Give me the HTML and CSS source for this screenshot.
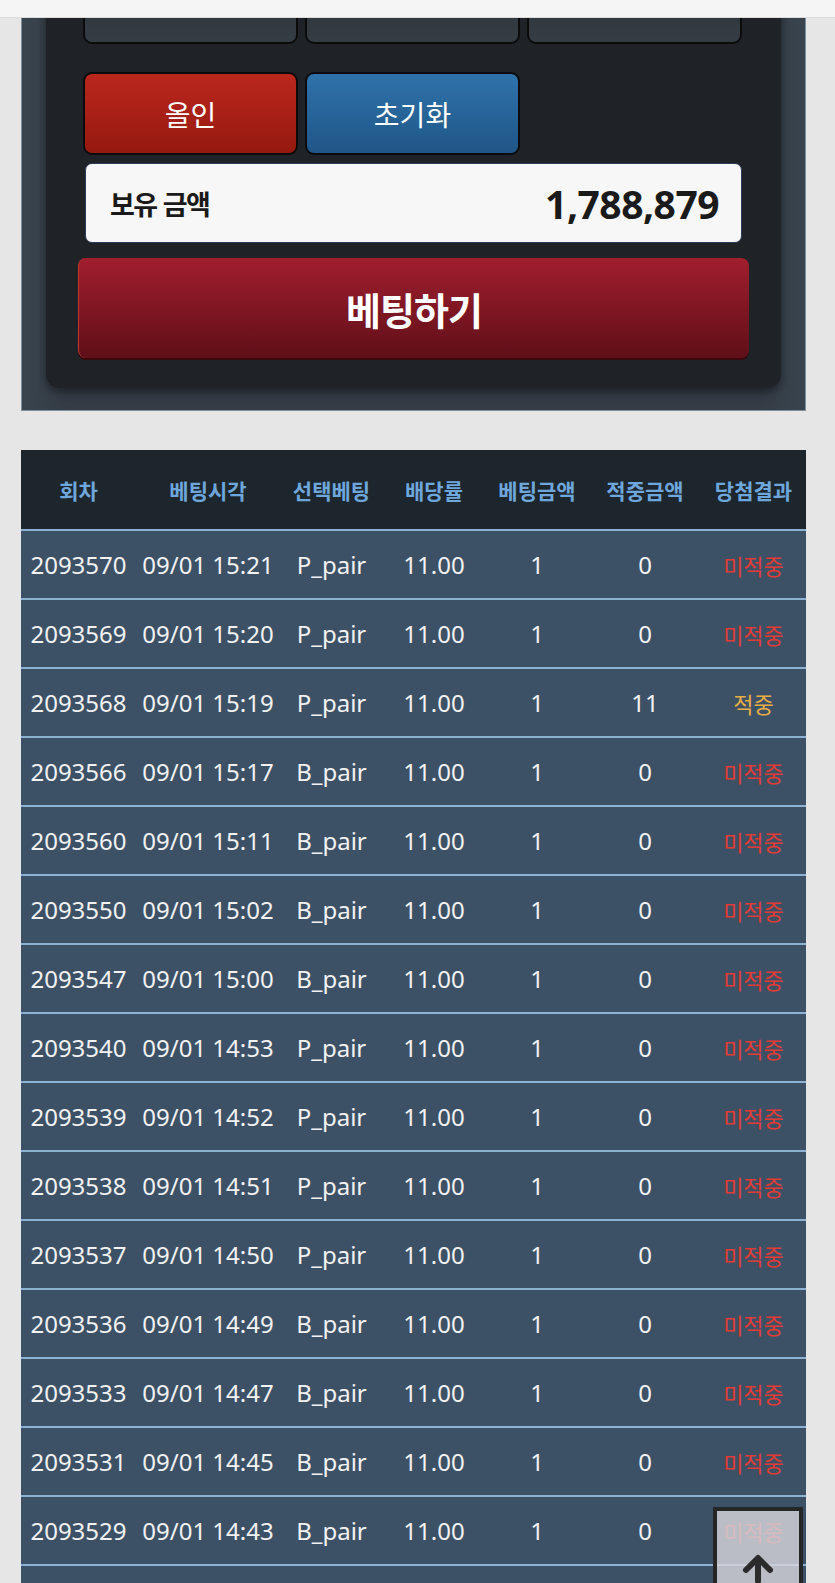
FILE: index.html
```html
<!DOCTYPE html>
<html lang="ko">
<head>
  <meta charset="UTF-8" />
  <title>베팅</title>
  <meta name="viewport" content="width=device-width, initial-scale=1.0" />
  <link rel="stylesheet" href="styles.css">
</head>
<body>
  <div class="topbar"></div>

  <div class="page">
    <div class="bet-panel">
      <div class="bet-inner">
        <div class="btn-grid">
          <button class="chip">1,000</button>
          <button class="chip">5,000</button>
          <button class="chip">10,000</button>
        </div>
        <div class="btn-grid second">
          <button class="action allin">올인</button>
          <button class="action reset">초기화</button>
        </div>
        <div class="balance">
          <span class="balance-label">보유 금액</span>
          <span class="balance-value">1,788,879</span>
        </div>
        <button class="bet-btn">베팅하기</button>
      </div>
    </div>

    <table class="history">
      <colgroup>
        <col style="width:115px">
        <col style="width:144px">
        <col style="width:103px">
        <col style="width:102px">
        <col style="width:104px">
        <col style="width:112px">
        <col style="width:105px">
      </colgroup>
      <thead>
        <tr>
          <th>회차</th>
          <th>베팅시각</th>
          <th>선택베팅</th>
          <th>배당률</th>
          <th>베팅금액</th>
          <th>적중금액</th>
          <th>당첨결과</th>
        </tr>
      </thead>
      <tbody id="rows"></tbody>
    </table>
  </div>

  <button class="to-top" aria-label="맨 위로">
    <svg width="34" height="34" viewBox="0 0 34 34">
      <path d="M17 30 V8 M5 19 L17 7 L29 19" fill="none" stroke="#2b2b2b" stroke-width="6" stroke-linecap="round" stroke-linejoin="round"/>
    </svg>
  </button>

  <script>
    const history = [
      ['2093570', '09/01 15:21', 'P_pair', 0],
      ['2093569', '09/01 15:20', 'P_pair', 0],
      ['2093568', '09/01 15:19', 'P_pair', 11],
      ['2093566', '09/01 15:17', 'B_pair', 0],
      ['2093560', '09/01 15:11', 'B_pair', 0],
      ['2093550', '09/01 15:02', 'B_pair', 0],
      ['2093547', '09/01 15:00', 'B_pair', 0],
      ['2093540', '09/01 14:53', 'P_pair', 0],
      ['2093539', '09/01 14:52', 'P_pair', 0],
      ['2093538', '09/01 14:51', 'P_pair', 0],
      ['2093537', '09/01 14:50', 'P_pair', 0],
      ['2093536', '09/01 14:49', 'B_pair', 0],
      ['2093533', '09/01 14:47', 'B_pair', 0],
      ['2093531', '09/01 14:45', 'B_pair', 0],
      ['2093529', '09/01 14:43', 'B_pair', 0],
      ['2093528', '09/01 14:42', 'B_pair', 0]
    ];

    const tbody = document.getElementById('rows');
    history.forEach(([round, time, pick, win]) => {
      const tr = document.createElement('tr');
      const result = win > 0
        ? '<td class="hit">적중</td>'
        : '<td class="miss">미적중</td>';
      tr.innerHTML =
        `<td>${round}</td><td>${time}</td><td>${pick}</td>` +
        `<td>11.00</td><td>1</td><td>${win}</td>` + result;
      tbody.appendChild(tr);
    });
  </script>
</body>
</html>
```

FILE: styles.css
```css
* {
  box-sizing: border-box;
}

html, body {
  margin: 0;
  padding: 0;
  background: #e6e6e6;
  font-family: 'Noto Sans', 'Noto Sans CJK KR', sans-serif;
}

.topbar {
  position: fixed;
  top: 0;
  left: 0;
  right: 0;
  height: 18px;
  background: #f5f5f5;
  border-bottom: 1px solid #dcdcdc;
  z-index: 10;
}

.page {
  width: 785px;
  margin: -39px 0 0 21px;
}

/* betting panel */

.bet-panel {
  background: linear-gradient(90deg, #3a444e 0%, #333c45 6%, #333c45 94%, #3a444e 100%);
  border: 1px solid #7d8e9c;
  border-top: none;
  padding: 0 24px 22px;
}

.bet-inner {
  background: #1f2327;
  border-radius: 0 0 14px 14px;
  box-shadow: 0 4px 10px rgba(0, 0, 0, 0.45);
  padding: 0 34px 30px;
  display: flex;
  flex-direction: column;
  align-items: stretch;
}

.btn-grid {
  display: grid;
  grid-template-columns: repeat(3, 215px);
  gap: 7px;
  padding: 0 3px;
}

.btn-grid.second {
  margin-top: 28px;
}

.btn-grid button {
  height: 83px;
  border: 2px solid #0b0b0b;
  border-radius: 9px;
  color: #fff;
  font-family: inherit;
  font-size: 28px;
  padding: 0;
}

.chip {
  background: linear-gradient(#2b3138, #343c44);
}

.allin {
  background: linear-gradient(#bb271d, #951910);
}

.reset {
  background: linear-gradient(#2f72ab, #1f5687);
}

.balance {
  margin: 8px 5px 0 5px;
  height: 80px;
  background: #f7f7f7;
  border: 1px solid #2d3957;
  border-radius: 7px;
  display: flex;
  align-items: center;
  justify-content: space-between;
  padding: 0 22px 0 24px;
  color: #1a1a1a;
  font-weight: 700;
}

.balance-label {
  font-size: 27px;
  font-family: 'Noto Sans CJK KR', sans-serif;
  letter-spacing: -1.5px;
}

.balance-value {
  font-size: 39px;
  letter-spacing: -0.5px;
}

.bet-btn {
  margin: 15px -2px 0;
  height: 100px;
  border: none;
  border-left: 1px solid #c2382f;
  border-radius: 8px;
  background: linear-gradient(#a11e2e, #5f0f18);
  box-shadow: 0 2px 0 #3a070b;
  color: #fff;
  font-family: 'Noto Sans CJK KR', sans-serif;
  font-size: 38px;
  font-weight: 700;
  letter-spacing: -1px;
  padding: 0;
}

/* history table */

.history {
  width: 785px;
  margin-top: 39px;
  border-collapse: collapse;
  table-layout: fixed;
}

.history th {
  height: 80px;
  background: #1d252d;
  color: #6ea7dc;
  font-family: 'Noto Sans CJK KR', sans-serif;
  font-size: 21px;
  font-weight: 700;
  text-align: center;
  padding: 0;
  white-space: nowrap;
}

.history td {
  height: 69px;
  background: #3d5166;
  border-top: 2px solid #8db2d1;
  color: #f2f2f2;
  font-size: 24px;
  text-align: center;
  padding: 0;
  white-space: nowrap;
}

.history td.miss {
  color: #e23b35;
  font-size: 22px;
}

.history td.hit {
  color: #e9ad45;
  font-size: 22px;
}

.to-top {
  position: fixed;
  right: 32px;
  bottom: -16px;
  width: 90px;
  height: 92px;
  background: rgba(214, 214, 220, 0.82);
  border: 4px solid #262626;
  padding: 40px 0 0;
  display: flex;
  justify-content: center;
  align-items: flex-start;
  z-index: 20;
}
```
